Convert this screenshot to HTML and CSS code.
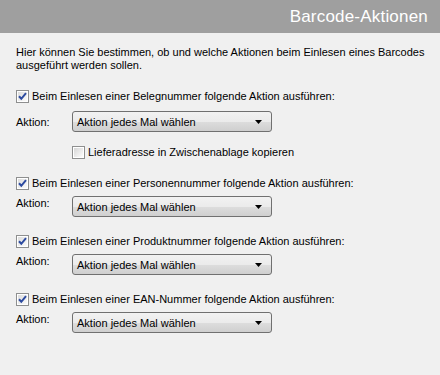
FILE: index.html
```html
<!DOCTYPE html>
<html lang="de">
<head>
<meta charset="utf-8">
<title>Barcode-Aktionen</title>
<link rel="stylesheet" href="styles.css">
</head>
<body>
<header class="titlebar"><h1 class="title">Barcode-Aktionen</h1></header>
<main class="content">
  <p class="intro">Hier können Sie bestimmen, ob und welche Aktionen beim Einlesen eines Barcodes ausgeführt werden sollen.</p>

  <section class="group first">
    <label class="check">
      <svg class="box" width="13" height="13" viewBox="0 0 13 13"><defs><linearGradient id="g1" x1="0" y1="0" x2="1" y2="1"><stop offset="0" stop-color="#dcdcdc"/><stop offset="1" stop-color="#fbfbfb"/></linearGradient></defs><rect x="0.5" y="0.5" width="12" height="12" fill="#fff" stroke="#8e8f8f"/><rect x="2" y="2" width="9" height="9" fill="url(#g1)"/><path d="M3 6.3 L5.3 8.8 L10 3.2" fill="none" stroke="#2d4ba0" stroke-width="2"/></svg>
      <span>Beim Einlesen einer Belegnummer folgende Aktion ausführen:</span>
    </label>
    <div class="action-row centered">
      <span class="action-label">Aktion:</span>
      <div class="select"><span>Aktion jedes Mal wählen</span><svg class="arrow" width="7" height="4" viewBox="0 0 7 4"><path d="M0 0 H7 L3.5 4 Z" fill="#000"/></svg></div>
    </div>
    <label class="check sub">
      <svg class="box" width="13" height="13" viewBox="0 0 13 13"><defs><linearGradient id="g2" x1="0" y1="0" x2="1" y2="1"><stop offset="0" stop-color="#d6d6d6"/><stop offset="1" stop-color="#fdfdfd"/></linearGradient></defs><rect x="0.5" y="0.5" width="12" height="12" fill="#fff" stroke="#8e8f8f"/><rect x="2" y="2" width="9" height="9" fill="url(#g2)"/></svg>
      <span>Lieferadresse in Zwischenablage kopieren</span>
    </label>
  </section>

  <section class="group">
    <label class="check">
      <svg class="box" width="13" height="13" viewBox="0 0 13 13"><rect x="0.5" y="0.5" width="12" height="12" fill="#fff" stroke="#8e8f8f"/><rect x="2" y="2" width="9" height="9" fill="url(#g1)"/><path d="M3 6.3 L5.3 8.8 L10 3.2" fill="none" stroke="#2d4ba0" stroke-width="2"/></svg>
      <span>Beim Einlesen einer Personennummer folgende Aktion ausführen:</span>
    </label>
    <div class="action-row">
      <span class="action-label">Aktion:</span>
      <div class="select"><span>Aktion jedes Mal wählen</span><svg class="arrow" width="7" height="4" viewBox="0 0 7 4"><path d="M0 0 H7 L3.5 4 Z" fill="#000"/></svg></div>
    </div>
  </section>

  <section class="group">
    <label class="check">
      <svg class="box" width="13" height="13" viewBox="0 0 13 13"><rect x="0.5" y="0.5" width="12" height="12" fill="#fff" stroke="#8e8f8f"/><rect x="2" y="2" width="9" height="9" fill="url(#g1)"/><path d="M3 6.3 L5.3 8.8 L10 3.2" fill="none" stroke="#2d4ba0" stroke-width="2"/></svg>
      <span>Beim Einlesen einer Produktnummer folgende Aktion ausführen:</span>
    </label>
    <div class="action-row">
      <span class="action-label">Aktion:</span>
      <div class="select"><span>Aktion jedes Mal wählen</span><svg class="arrow" width="7" height="4" viewBox="0 0 7 4"><path d="M0 0 H7 L3.5 4 Z" fill="#000"/></svg></div>
    </div>
  </section>

  <section class="group">
    <label class="check">
      <svg class="box" width="13" height="13" viewBox="0 0 13 13"><rect x="0.5" y="0.5" width="12" height="12" fill="#fff" stroke="#8e8f8f"/><rect x="2" y="2" width="9" height="9" fill="url(#g1)"/><path d="M3 6.3 L5.3 8.8 L10 3.2" fill="none" stroke="#2d4ba0" stroke-width="2"/></svg>
      <span>Beim Einlesen einer EAN-Nummer folgende Aktion ausführen:</span>
    </label>
    <div class="action-row">
      <span class="action-label">Aktion:</span>
      <div class="select"><span>Aktion jedes Mal wählen</span><svg class="arrow" width="7" height="4" viewBox="0 0 7 4"><path d="M0 0 H7 L3.5 4 Z" fill="#000"/></svg></div>
    </div>
  </section>
</main>
</body>
</html>
```

FILE: styles.css
```css
html, body {
  margin: 0;
  padding: 0;
  background: #f0f0f0;
  height: 100%;
}
body {
  font-family: "Liberation Sans", Arial, sans-serif;
  font-size: 11px;
  color: #000;
}
.titlebar {
  height: 33px;
  background: #9f9f9f;
  display: flex;
  align-items: center;
  justify-content: flex-end;
  padding-right: 12px;
}
.title {
  margin: 0;
  font-size: 17px;
  font-weight: normal;
  color: #fff;
  line-height: 1;
  letter-spacing: 0.2px;
}
.content {
  padding: 13px 16px 0 16px;
}
.intro {
  margin: 0;
  line-height: 13px;
  width: 418px;
}
.group {
  margin-top: 18px;
}
.check {
  display: flex;
  align-items: center;
  gap: 3px;
  height: 13px;
  line-height: 13px;
}
.box {
  display: block;
  flex: none;
}
.check.sub {
  margin-left: 56px;
  margin-top: 14px;
}
.action-row {
  display: flex;
  align-items: flex-start;
  margin-top: 6px;
}
.action-row.centered {
  align-items: center;
  margin-top: 8px;
}
.action-label {
  width: 56px;
  flex: none;
  line-height: 13px;
  padding-top: 1px;
}
.action-row.centered .action-label {
  padding-top: 2px;
}
.select {
  box-sizing: border-box;
  width: 200px;
  height: 21px;
  border: 1px solid #707070;
  border-radius: 3px;
  background: linear-gradient(#f2f2f2 0%, #ebebeb 50%, #dddddd 51%, #cfcfcf 100%);
  display: flex;
  align-items: center;
  justify-content: space-between;
  padding: 0 9px 0 4px;
}
.arrow {
  display: block;
}
```
